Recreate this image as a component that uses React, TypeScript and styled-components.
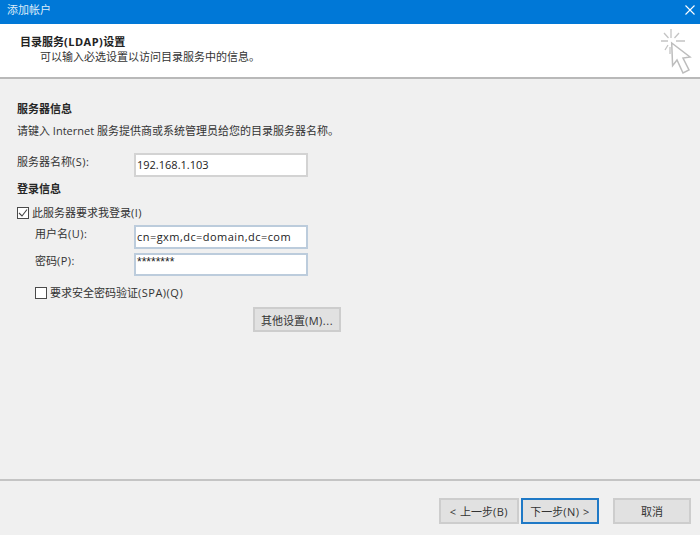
import React from "react";
import styled, { createGlobalStyle } from "styled-components";

const FONT = `"Open Sans", "Noto Sans CJK SC", "Liberation Sans", sans-serif`;

const Global = createGlobalStyle`
  html, body { margin: 0; padding: 0; }
  body { font-family: ${FONT}; font-size: 11px; color: #333; }
`;

const Window = styled.div`
  width: 700px; height: 535px; display: flex; flex-direction: column;
  background: #f0f0f0; overflow: hidden;
`;
const TitleBar = styled.div`
  height: 24px; box-sizing: border-box; background: #0078d7; color: #dcecf9; display: flex; align-items: flex-start;
  justify-content: space-between; padding: 2px 5px 0 7px; flex: none; font-size: 11px; line-height: 16px;
`;
const CloseIcon = styled.svg`
  width: 10px; height: 10px; margin-top: 3px; stroke: #fff; stroke-width: 1.1; fill: none;
`;
const Header = styled.div`
  height: 55px; box-sizing: border-box; background: #fff; border-bottom: 2px solid #b9b9b9;
  display: flex; justify-content: space-between; flex: none;
`;
const HeaderText = styled.div`
  padding: 10px 0 0 20px; display: flex; flex-direction: column;
`;
const HeaderTitle = styled.div`
  font-weight: 700; font-size: 11px; line-height: 15px; color: #222;
`;
const HeaderSub = styled.div`
  font-size: 11px; line-height: 16px; padding-left: 20px; color: #333;
`;
const Cursor = styled.svg`
  width: 34px; height: 50px; margin: 3px 6px 0 0; flex: none;
`;
const Body = styled.div`
  flex: 1; padding: 22px 0 0 17px; display: flex; flex-direction: column; align-items: flex-start;
  min-height: 0;
`;
const SectionTitle = styled.div<{ $mt?: number }>`
  font-weight: 700; font-size: 11px; line-height: 16px; color: #262626; margin-top: ${p => p.$mt ?? 0}px;
`;
const Desc = styled.div`
  font-size: 11px; line-height: 16px; margin-top: 6px; color: #333; white-space: nowrap;
`;
const Latin = styled.span`
  letter-spacing: 0.5px;
`;
const Row = styled.div<{ $indent?: number; $mt?: number }>`
  display: flex; margin-left: ${p => p.$indent ?? 0}px; margin-top: ${p => p.$mt ?? 0}px; align-items: flex-start;
`;
const Label = styled.div<{ $w: number; $pt?: number }>`
  width: ${p => p.$w}px; flex: none; font-size: 11px; line-height: 16px; padding-top: ${p => p.$pt ?? 0}px; color: #333;
`;
const Input = styled.div<{ $h: number; $border: string; $lh: number; $ls?: number }>`
  width: 174px; height: ${p => p.$h}px; box-sizing: border-box; background: #fff;
  border: 2px solid ${p => p.$border}; padding: 0 0 0 1px;
  font-size: 11px; line-height: ${p => p.$lh}px; letter-spacing: ${p => p.$ls ?? 0}px;
  color: #222; white-space: nowrap;
`;
const Stars = styled.span`
  font-family: "Liberation Sans", sans-serif; font-size: 12px; letter-spacing: 0;
`;
const CheckRow = styled.div<{ $indent?: number; $mt?: number }>`
  display: flex; align-items: center; gap: 3px; height: 16px;
  margin-left: ${p => p.$indent ?? 0}px; margin-top: ${p => p.$mt ?? 0}px;
  font-size: 11px; color: #333;
`;
const Box = styled.span`
  width: 12px; height: 12px; box-sizing: border-box; border: 1px solid #4a4a4a; background: #fff;
  flex: none; display: block; position: relative; margin-top: 2px;
`;
const Tick = styled.svg`
  position: absolute; inset: 0; width: 10px; height: 10px; stroke: #444; fill: none; stroke-width: 1.1;
`;
const Button = styled.div<{ $w: number; $h?: number; $primary?: boolean }>`
  width: ${p => p.$w}px; height: ${p => p.$h ?? 26}px; box-sizing: border-box; flex: none;
  background: #e1e1e1; border: ${p => (p.$primary ? "2px solid #1f79c6" : "2px solid #cdcdcd")};
  display: flex; align-items: center; justify-content: center;
  font-size: 11px; color: #333; white-space: nowrap;
`;
const MoreRow = styled.div`
  margin: 7px 0 0 236px;
`;
const Footer = styled.div`
  height: 56px; box-sizing: border-box; flex: none; border-top: 2px solid #c4c4c4; display: flex; justify-content: flex-end;
  align-items: flex-start; padding: 17px 9px 0 0;
`;
const GapButton = styled.div`
  margin-left: 14px;
`;
const NavGroup = styled.div`
  display: flex; gap: 2px;
`;

export default function App() {
  return (
    <Window>
      <Global />
      <TitleBar>
        添加帐户
        <CloseIcon viewBox="0 0 10 10"><path d="M0.5 0.5L9.5 9.5M9.5 0.5L0.5 9.5" /></CloseIcon>
      </TitleBar>
      <Header>
        <HeaderText>
          <HeaderTitle>目录服务<Latin>(LDAP)</Latin>设置</HeaderTitle>
          <HeaderSub>可以输入必选设置以访问目录服务中的信息。</HeaderSub>
        </HeaderText>
        <Cursor viewBox="0 0 34 50">
          <g stroke="#c4c4c4" strokeWidth="1.3" fill="none">
            <path d="M11 2V11M1 14H8M16 14H25M4 6L8.5 11M19 6L14.5 11M10 27V20M5 23L8 18" />
            <path d="M11.7 16L12.6 38.7L17 33L23 46L29 43L23 31L30 30Z" fill="#fff" strokeWidth="1.5" stroke="#bdbdbd" />
          </g>
        </Cursor>
      </Header>
      <Body>
        <SectionTitle>服务器信息</SectionTitle>
        <Desc>请键入 Internet 服务提供商或系统管理员给您的目录服务器名称。</Desc>
        <Row $mt={14}>
          <Label $w={117} $pt={1}>服务器名称<Latin>(S):</Latin></Label>
          <Input $h={24} $border="#d3d3d3" $lh={20}>192.168.1.103</Input>
        </Row>
        <SectionTitle $mt={4}>登录信息</SectionTitle>
        <CheckRow $mt={7}>
          <Box>
            <Tick viewBox="0 0 10 10"><path d="M1 5L4 8L9 1.5" /></Tick>
          </Box>
          <span>此服务器要求我登录<Latin>(I)</Latin></span>
        </CheckRow>
        <Row $indent={18} $mt={5}>
          <Label $w={99} $pt={1}>用户名<Latin>(U):</Latin></Label>
          <Input $h={24} $border="#bcccdc" $lh={19} $ls={0.45}>cn=gxm,dc=domain,dc=com</Input>
        </Row>
        <Row $indent={18} $mt={4}>
          <Label $w={99} $pt={0}>密码<Latin>(P):</Latin></Label>
          <Input $h={23} $border="#bcccdc" $lh={14}><Stars>********</Stars></Input>
        </Row>
        <CheckRow $indent={18} $mt={8}>
          <Box />
          <span>要求安全密码验证<Latin>(SPA)(Q)</Latin></span>
        </CheckRow>
        <MoreRow>
          <Button $w={88} $h={25}><span>其他设置<Latin>(M)...</Latin></span></Button>
        </MoreRow>
      </Body>
      <Footer>
        <NavGroup>
          <Button $w={80}><span><Latin>&lt; </Latin>上一步<Latin>(B)</Latin></span></Button>
          <Button $w={78} $primary><span>下一步<Latin>(N) &gt;</Latin></span></Button>
        </NavGroup>
        <GapButton>
          <Button $w={78}>取消</Button>
        </GapButton>
      </Footer>
    </Window>
  );
}
